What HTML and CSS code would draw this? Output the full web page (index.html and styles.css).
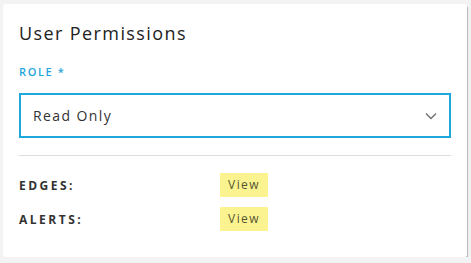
FILE: index.html
```html
<!DOCTYPE html>
<html lang="en">
<head>
    <meta charset="UTF-8">
    <meta name="viewport" content="width=device-width, initial-scale=1.0">
    <title>User Permissions</title>
    <link rel="stylesheet" href="styles.css">
</head>
<body>
    <div class="card">
        <h3 class="card_title">User Permissions</h3>
        <!-- role select -->
        <label class="field_label">ROLE *</label>
        <div class="select_box">
            <span>Read Only</span>
            <svg class="chevron" width="12" height="8" viewBox="0 0 12 8">
                <path d="M1 1.5 L6 6.5 L11 1.5" fill="none" stroke="#6f6f6f" stroke-width="1.4"/>
            </svg>
        </div>
        <hr class="divider">
        <!-- permission rows -->
        <div class="perm_row">
            <span class="perm_name">EDGES:</span>
            <span class="badge">View</span>
        </div>
        <div class="perm_row">
            <span class="perm_name">ALERTS:</span>
            <span class="badge">View</span>
        </div>
    </div>
</body>
</html>
```

FILE: styles.css
```css
body{
    margin: 0;
    background-color: #f3f3f3;
    font-family: "Open Sans", "DejaVu Sans", sans-serif;
}
.card{
    margin: 4px 4px 0 3px;
    height: 253px; box-sizing: border-box;
    background-color: #ffffff;
    padding: 0 16px 0 16px;
    box-shadow: 1px 2px 1px rgba(0,0,0,0.25);
    border-radius: 2px;
}
.card_title{
    margin: 0; padding-top: 17px;
    font-size: 18px; font-weight: 400;
    color: #222222; letter-spacing: 1.4px;
    line-height: 24px;
}
.field_label{
    display: block; margin-top: 20px;
    font-size: 11px; font-weight: 600;
    color: #1ea5d9; letter-spacing: 1.6px;
    line-height: 14px;
}
.select_box{
    margin-top: 14px; height: 45px;
    border: 2px solid #1fa8dc; box-sizing: border-box;
    display: flex; align-items: center; justify-content: space-between;
    padding: 0 12px 0 12px;
    font-size: 14px; color: #333333; letter-spacing: 1.4px;
}
.chevron{ margin-top: 1px; }
.divider{
    border: none; border-top: 1px solid #dddddd;
    margin: 17px 0 17px 0;
}
.perm_row{
    display: flex; align-items: center;
    height: 24px; margin-bottom: 10px;
}
.perm_name{
    width: 201px;
    font-size: 12px; font-weight: 700;
    color: #333333; letter-spacing: 2.5px;
}
.badge{
    width: 48px; height: 24px; line-height: 24px;
    text-align: center;
    background-color: #fbf38f;
    font-size: 12px; color: #555533; letter-spacing: 1.4px;
}
```
